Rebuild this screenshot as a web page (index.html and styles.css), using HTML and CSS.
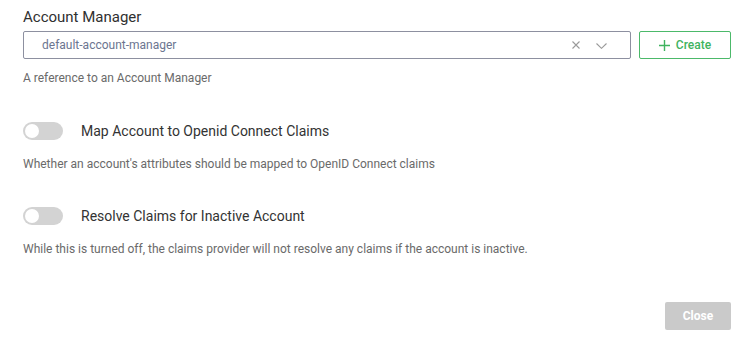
FILE: index.html
```html
<!DOCTYPE html>
<html lang="en">
<head>
<meta charset="utf-8">
<title>Account Manager</title>
<link rel="stylesheet" href="styles.css">
</head>
<body>
<div class="panel">
  <div class="field">
    <div class="field-title">Account Manager</div>
    <div class="select-row">
      <div class="select">
        <span class="select-value">default-account-manager</span>
        <span class="select-icons">
          <svg class="icon-clear" width="8" height="8" viewBox="0 0 8 8"><path d="M0.5 0.5L7.5 7.5M7.5 0.5L0.5 7.5" stroke="#9a9a9a" stroke-width="1.1" fill="none"/></svg>
          <svg class="icon-chevron" width="11" height="6" viewBox="0 0 11 6"><path d="M0.5 0.5L5.5 5.3L10.5 0.5" stroke="#9a9a9a" stroke-width="1.1" fill="none"/></svg>
        </span>
      </div>
      <button class="btn-create">
        <svg width="11" height="11" viewBox="0 0 11 11"><path d="M5.5 0V11M0 5.5H11" stroke="#3fb35f" stroke-width="1.4" fill="none"/></svg>
        <span>Create</span>
      </button>
    </div>
    <div class="helper helper-first">A reference to an Account Manager</div>
  </div>

  <div class="field toggle-field first">
    <div class="toggle-row">
      <span class="toggle"><span class="knob"></span></span>
      <span class="toggle-label">Map Account to Openid Connect Claims</span>
    </div>
    <div class="helper">Whether an account's attributes should be mapped to OpenID Connect claims</div>
  </div>

  <div class="field toggle-field second">
    <div class="toggle-row">
      <span class="toggle"><span class="knob"></span></span>
      <span class="toggle-label">Resolve Claims for Inactive Account</span>
    </div>
    <div class="helper">While this is turned off, the claims provider will not resolve any claims if the account is inactive.</div>
  </div>

  <div class="footer">
    <button class="btn-close">Close</button>
  </div>
</div>
</body>
</html>
```

FILE: styles.css
```css
* { box-sizing: border-box; }

body {
  margin: 0;
  background: #ffffff;
  font-family: Roboto, "Liberation Sans", Arial, sans-serif;
  color: #333333;
}

.panel {
  padding: 7px 11px 0 23px;
}

.field-title {
  font-size: 15px;
  line-height: 20px;
  color: #303030;
}

.select-row {
  display: flex;
  gap: 8px;
  margin-top: 4px;
}

.select {
  flex: 1;
  height: 28px;
  border: 1px solid #8d90a0;
  border-radius: 2px;
  display: flex;
  align-items: center;
  padding: 0 23px 0 18px;
}

.select-value {
  flex: 1;
  font-size: 12px;
  color: #6c7590;
}

.select-icons {
  display: flex;
  align-items: center;
  gap: 16px;
}

.icon-chevron { margin-top: 1px; }

.btn-create {
  width: 92px;
  height: 28px;
  border: 1px solid #4cb96a;
  border-radius: 2px;
  background: #ffffff;
  color: #3fb35f;
  font-family: inherit;
  font-size: 12px;
  font-weight: 500;
  display: flex;
  align-items: center;
  justify-content: center;
  gap: 6px;
  padding: 0;
}

.helper {
  font-size: 12px;
  line-height: 18px;
  color: #6a6a6a;
  margin-top: 15px;
}

.helper-first { margin-top: 10px; }

.toggle-field.first { margin-top: 35px; }
.toggle-field.second { margin-top: 34px; }

.toggle-row {
  display: flex;
  align-items: center;
  gap: 18px;
  height: 18px;
}

.toggle {
  width: 40px;
  height: 18px;
  border-radius: 9px;
  background: #d3d3d3;
  display: flex;
  align-items: center;
  padding-left: 2px;
}

.knob {
  width: 14px;
  height: 14px;
  border-radius: 50%;
  background: #ffffff;
}

.toggle-label {
  font-size: 14px;
  line-height: 18px;
  color: #333333;
}

.footer {
  display: flex;
  justify-content: flex-end;
  margin-top: 44px;
}

.btn-close {
  width: 66px;
  height: 28px;
  border: none;
  border-radius: 2px;
  background: #cacaca;
  color: #ffffff;
  font-family: inherit;
  font-size: 12px;
  font-weight: 700;
  padding: 0;
}
```
